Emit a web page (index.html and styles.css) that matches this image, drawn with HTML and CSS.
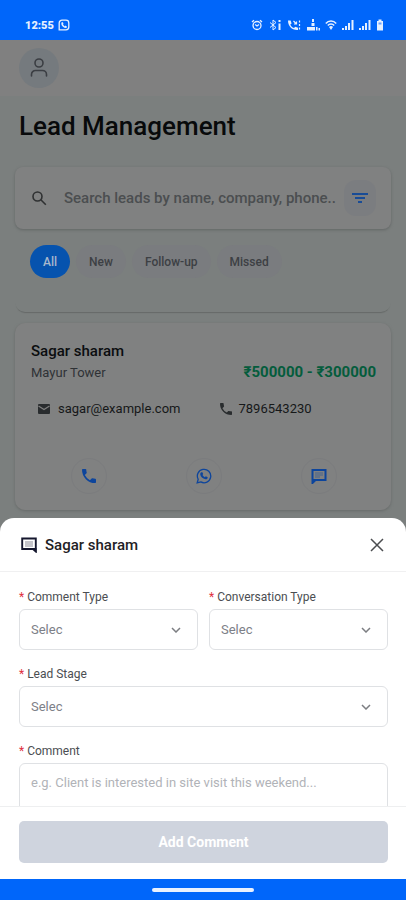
FILE: index.html
```html
<!DOCTYPE html>
<html lang="en">
<head>
<meta charset="utf-8">
<meta name="viewport" content="width=device-width, initial-scale=1">
<title>Lead Management</title>
<link rel="stylesheet" href="styles.css">
</head>
<body>
<header class="status">
  <span class="status-time">12:55</span>
  <svg class="status-app" viewBox="0 0 12 12" width="12" height="12" fill="none" stroke="currentColor"><path d="M1.2 10.8V4a2.8 2.8 0 0 1 2.8-2.8h4A2.8 2.8 0 0 1 10.800 4v4A2.800 2.800 0 0 1 8 10.800z" stroke-width="1.300"/><path d="M4 3.500c-.3 2.500 2 5 4.600 4.800M4 3.500l1 1.400M8.600 8.300L7 7.200" stroke-width="1.500"/></svg>
  <div class="status-icons">
    <svg viewBox="0 0 12 12" width="12" height="12" fill="none" stroke="currentColor" stroke-width="1.300"><circle cx="6" cy="6.500" r="4"/><path d="M1 3l2-1.800M11 3L9 1.200M4.200 5.500L6 7l2-1.500"/></svg>
    <svg viewBox="0 0 14 12" width="14" height="12" fill="none" stroke="currentColor"><path d="M2 3.500l6 5L5 11V1l3 2.500-6 5"/><path d="M11.500 4.500V11M11.500 1v2" stroke-width="2"/></svg>
    <svg viewBox="0 0 14 12" width="14" height="12"><path d="M1 1.500h2.600l1 3-1.300 1C4 7.300 5.200 8.300 7 9l1.300-1.300 2.700 1V11C5 11.500 1 7 1 1.500z" fill="currentColor"/><path d="M6.500 2l3 3M9.500 2.500V5H7M12.500 1.500v2m0 1.500v2m0 1.500v2" stroke="currentColor" fill="none" stroke-width="1.200"/></svg>
    <svg viewBox="0 0 14 12" width="14" height="12" fill="currentColor"><path d="M6 0h2v3H6zM5.500 4h3v3h-3zM1 8h8v3.500H1zM10 8h1.500v3.500H10zM12.500 9H14v2.500h-1.500z"/></svg>
    <svg viewBox="0 0 12 12" width="12" height="12" fill="none" stroke="currentColor" stroke-width="1.400"><path d="M.8 4.500C3.500 1.200 8.500 1.200 11.200 4.500M2.800 6.500C4.500 4.400 7.500 4.400 9.200 6.500"/><path d="M4 8c1-1.200 3-1.200 4 0l-2 3z" fill="currentColor" stroke="none"/></svg>
    <svg viewBox="0 0 12 12" width="12" height="12" fill="currentColor"><path d="M0 9h2v2H0zM3 7h2v4H3zM6 4h2v7H6zM9.500 1h2v10h-2z"/></svg>
    <svg viewBox="0 0 12 12" width="12" height="12" fill="currentColor"><path d="M0 9h2v2H0zM3 7h2v4H3zM6 4h2v7H6zM9.500 1h2v10h-2z"/></svg>
    <svg viewBox="0 0 8 12" width="8" height="12" fill="currentColor"><path d="M2.500.5h3V2H7v9.500H1V2h1.500z"/><path d="M2.500 3.500h3v2h-3z" fill="#6aa1ff"/></svg>
  </div>
</header>

<div class="stage">
  <main class="page">
    <div class="topbar">
      <button class="avatar" type="button" aria-label="Profile">
        <svg viewBox="0 0 24 24" width="24" height="24" fill="none" stroke="currentColor" stroke-width="1.600" stroke-linecap="round"><circle cx="12" cy="7" r="4"/><path d="M4.500 20v-1.500a4 4 0 0 1 4-4h7a4 4 0 0 1 4 4V20"/></svg>
      </button>
    </div>
    <h1 class="title">Lead Management</h1>

    <div class="search">
      <svg class="search-icon" viewBox="0 0 16 16" width="16" height="16" fill="none" stroke="currentColor" stroke-width="1.600"><circle cx="6.500" cy="6.500" r="4.500"/><path d="M9.800 9.800l5 5"/></svg>
      <input class="search-input" type="text" aria-label="Search leads" placeholder="Search leads by name, company, phone..">
      <button class="filter" type="button" aria-label="Filter">
        <svg viewBox="0 0 16 12" width="16" height="12" stroke="currentColor" fill="none" stroke-width="2"><path d="M0 2h16M3 6h10M6 10h4"/></svg>
      </button>
    </div>

    <div class="chips">
      <button class="chip chip-on" type="button">All</button>
      <button class="chip" type="button">New</button>
      <button class="chip" type="button">Follow-up</button>
      <button class="chip" type="button">Missed</button>
    </div>

    <div class="leads">
      <div class="card card-tail"></div>
      <article class="card">
        <div class="lead-head">
          <div>
            <h2 class="lead-name">Sagar sharam</h2>
            <p class="lead-place">Mayur Tower</p>
          </div>
          <p class="lead-price">₹500000 - ₹300000</p>
        </div>
        <div class="contacts">
          <span class="contact"><svg viewBox="0 0 14 12" width="14" height="12"><rect x="1" y="1" width="12" height="10" rx="1" fill="currentColor"/><path d="M1.500 3L7 6.500 12.500 3" fill="none" stroke="#808080" stroke-width="1.200"/></svg>sagar@example.com</span>
          <span class="contact"><svg viewBox="3 3 18 18" width="12" height="12" fill="currentColor"><path d="M6.620 10.790a15.150 15.150 0 0 0 6.590 6.590l2.200-2.200a1 1 0 0 1 1.020-.24c1.120.37 2.330.57 3.570.57a1 1 0 0 1 1 1V20a1 1 0 0 1-1 1A17 17 0 0 1 3 4a1 1 0 0 1 1-1h3.500a1 1 0 0 1 1 1c0 1.250.2 2.450.57 3.570a1 1 0 0 1-.25 1.020z"/></svg>7896543230</span>
        </div>
        <div class="actions">
          <button class="action" type="button" aria-label="Call"><svg viewBox="3 3 18 18" width="14" height="14" fill="currentColor"><path d="M6.620 10.790a15.150 15.150 0 0 0 6.590 6.590l2.200-2.200a1 1 0 0 1 1.020-.24c1.120.37 2.330.57 3.570.57a1 1 0 0 1 1 1V20a1 1 0 0 1-1 1A17 17 0 0 1 3 4a1 1 0 0 1 1-1h3.500a1 1 0 0 1 1 1c0 1.250.2 2.450.57 3.570a1 1 0 0 1-.25 1.020z"/></svg></button>
          <button class="action" type="button" aria-label="WhatsApp"><svg viewBox="0 0 16 16" width="16" height="16"><path d="M1.200 14.800l1-3.500A6.700 6.700 0 1 1 4.800 13.900z" fill="none" stroke="currentColor" stroke-width="1.300"/><path d="M5.200 4.200h1.200l.8 1.900-.7.9c.5 1 1.300 1.700 2.400 2.200l.9-.9 1.900.9c.1 1.500-1.100 2.200-2.200 2-2.900-.5-5-2.600-5.300-5 0-.8.400-1.600 1-2z" fill="currentColor"/></svg></button>
          <button class="action" type="button" aria-label="Comment"><svg viewBox="0 0 16 16" width="16" height="16"><path d="M1.500 15V2h13v10H4.500z" fill="none" stroke="currentColor" stroke-width="2"/><path d="M1 15.500V11h4z" fill="currentColor"/><path d="M4 5h8M4 7h8M4 9h5" stroke="currentColor" stroke-width=".5"/></svg></button>
        </div>
      </article>
    </div>
  </main>

  <section class="sheet" role="dialog" aria-labelledby="sheet-title">
    <div class="sheet-head">
      <svg viewBox="0 0 16 16" width="16" height="16"><path d="M1.200 1.500h13.600v13L12 12H1.200z" fill="none" stroke="currentColor" stroke-width="1.900"/><path d="M15.500 15.500V11H11z" fill="currentColor"/><path d="M4 5h8M4 7h8M4 9h8" stroke="currentColor" stroke-width=".5"/></svg>
      <h2 class="sheet-title" id="sheet-title">Sagar sharam</h2>
      <button class="close" type="button" aria-label="Close"><svg viewBox="0 0 14 14" width="14" height="14" fill="none" stroke="currentColor" stroke-width="1.500"><path d="M1 1l12 12M13 1L1 13"/></svg></button>
    </div>
    <form class="sheet-form" id="comment-form">
      <div class="field">
        <label class="label" for="ctype"><span class="req">*</span> Comment Type</label>
        <div class="select"><select id="ctype"><option>Selec</option></select><svg viewBox="0 0 10 6" width="10" height="6"><path d="M1 1l4 4 4-4"/></svg></div>
      </div>
      <div class="field">
        <label class="label" for="vtype"><span class="req">*</span> Conversation Type</label>
        <div class="select"><select id="vtype"><option>Selec</option></select><svg viewBox="0 0 10 6" width="10" height="6"><path d="M1 1l4 4 4-4"/></svg></div>
      </div>
      <div class="field field-wide">
        <label class="label" for="stage"><span class="req">*</span> Lead Stage</label>
        <div class="select"><select id="stage"><option>Selec</option></select><svg viewBox="0 0 10 6" width="10" height="6"><path d="M1 1l4 4 4-4"/></svg></div>
      </div>
      <div class="field field-wide">
        <label class="label" for="comment"><span class="req">*</span> Comment</label>
        <textarea class="comment" id="comment" rows="4" placeholder="e.g. Client is interested in site visit this weekend..."></textarea>
      </div>
    </form>
    <div class="sheet-foot">
      <button class="submit" type="submit" form="comment-form">Add Comment</button>
    </div>
  </section>
</div>

<footer class="navbar"><span class="pill"></span></footer>
</body>
</html>
```
FILE: styles.css
```css
* { box-sizing: border-box; }
body {
  margin: 0;
  height: 100vh;
  display: flex;
  flex-direction: column;
  font-family: Roboto, "Noto Sans", sans-serif;
  background: #7b7f7e;
}
h1, h2, p { margin: 0; }
button, input, select, textarea { font: inherit; color: inherit; margin: 0; }
button { border: 0; padding: 0; background: none; display: flex; align-items: center; justify-content: center; }
svg { flex: none; }

.status {
  display: flex;
  align-items: center;
  height: 40px;
  padding: 10px 22px 0 25px;
  background: #0066fa;
  color: #e6f0ff;
}
.status-time { font-size: 11px; font-weight: 900; }
.status-app { margin-left: 4px; }
.status-icons { display: flex; gap: 5px; margin-left: auto; }

.stage { position: relative; flex: 1; min-height: 0; overflow: hidden; }

.topbar { padding: 8px 19px; background: #808080; }
.avatar { width: 40px; height: 40px; border-radius: 50%; background: #757a7e; color: #3b3e43; }
.title { padding: 14px 19px 0; font-size: 26px; line-height: 32px; font-weight: 500; color: #080a0b; }

.search {
  display: flex;
  align-items: center;
  margin: 25px 15px 0;
  height: 62px;
  padding: 0 15px 0 16px;
  border-radius: 8px;
  background: #808181;
  box-shadow: 0 1px 3px #626665;
}
.search-icon { color: #2f3132; }
.search-input {
  flex: 1;
  min-width: 0;
  margin-left: 17px;
  padding: 0;
  border: 0;
  background: none;
  font-size: 15px;
  font-weight: 500;
}
.search-input::placeholder { color: #4b4e50; opacity: 1; }
.filter { width: 32px; height: 36px; border-radius: 12px; background: #7b7d80; color: #194c96; }

.chips { display: flex; gap: 6px; padding: 16px 30px 0; }
.chip {
  height: 33px;
  padding: 0 13px;
  border-radius: 17px;
  background: #7a7c7f;
  color: #3d4044;
  font-size: 12px;
  font-weight: 500;
}
.chip-on { background: #0653ae; color: #a9b8cc; }

.leads { display: flex; flex-direction: column; gap: 11px; padding: 10px 15px 0; }
.card {
  padding: 17px 15px 16px 16px;
  border-radius: 10px;
  background: #808181;
  box-shadow: 0 1px 3px #666a69;
}
.card-tail { height: 24px; padding: 0; background: none; border-radius: 0 0 10px 10px; box-shadow: 0 2px 1px -1px #666a69; }
.lead-head { display: flex; justify-content: space-between; align-items: flex-end; }
.lead-name { font-size: 15px; line-height: 22px; font-weight: 500; color: #0b0d0f; }
.lead-place { font-size: 13px; line-height: 22px; color: #2f3236; }
.lead-price { font-size: 15px; line-height: 24px; font-weight: 700; color: #045c3c; }
.contacts { display: grid; grid-template-columns: 1fr 1fr; column-gap: 26px; padding: 15px 0 0 6px; }
.contact { display: flex; align-items: center; gap: 7px; font-size: 13px; line-height: 20px; color: #161819; }
.contact svg { color: #292c2e; }
.actions { display: grid; grid-template-columns: repeat(3, 1fr); justify-items: center; padding-top: 39px; }
.action { width: 36px; height: 36px; border: 1px solid #7b7c7e; border-radius: 50%; color: #0d459c; }

.sheet {
  position: absolute;
  left: 0;
  right: 0;
  bottom: 0;
  border-radius: 14px 14px 0 0;
  background: #fff;
}
.sheet-head {
  display: flex;
  align-items: center;
  height: 54px;
  padding: 0 22px 0 21px;
  border-bottom: 1px solid #f0f0f1;
  color: #15172e;
}
.sheet-title { flex: 1; margin-left: 8px; font-size: 15px; line-height: 22px; font-weight: 500; color: #1f2125; }
.close { color: #4b4d50; }
.sheet-form {
  display: grid;
  grid-template-columns: 1fr 1fr;
  gap: 14px 11px;
  align-content: start;
  max-height: 26vh;
  padding: 15px 18px 0 19px;
  overflow: hidden;
}
.field { display: flex; flex-direction: column; gap: 3px; min-width: 0; }
.field-wide { grid-column: 1 / -1; }
.label { font-size: 12px; line-height: 20px; margin-bottom: -1px; color: #4b4e52; }
.req { color: #e02f3f; }
.select { display: grid; align-items: center; }
.select select, .select svg { grid-area: 1 / 1; }
.select svg { justify-self: end; margin-right: 17px; fill: none; stroke: #7c7e82; stroke-width: 1.500; pointer-events: none; }
.select select, .comment {
  width: 100%;
  border: 1px solid #dfe1e4;
  border-radius: 6px;
  background: #fff;
  font-size: 13px;
}
.select select { height: 41px; padding: 0 11px; appearance: none; color: #7d8087; }
.comment { display: block; padding: 10px 11px; line-height: 18px; resize: none; overflow: hidden; }
.comment::placeholder { color: #b1b3b8; opacity: 1; }
.sheet-foot { padding: 14px 18px 16px 19px; border-top: 1px solid #eeeff0; }
.submit { width: 100%; height: 42px; border-radius: 5px; background: #cfd4de; color: #fff; font-size: 14px; font-weight: 700; }

.navbar { display: flex; align-items: center; justify-content: center; height: 21px; background: #0066fa; }
.pill { width: 25%; height: 4px; border-radius: 2px; background: #e9f1ff; }
```
